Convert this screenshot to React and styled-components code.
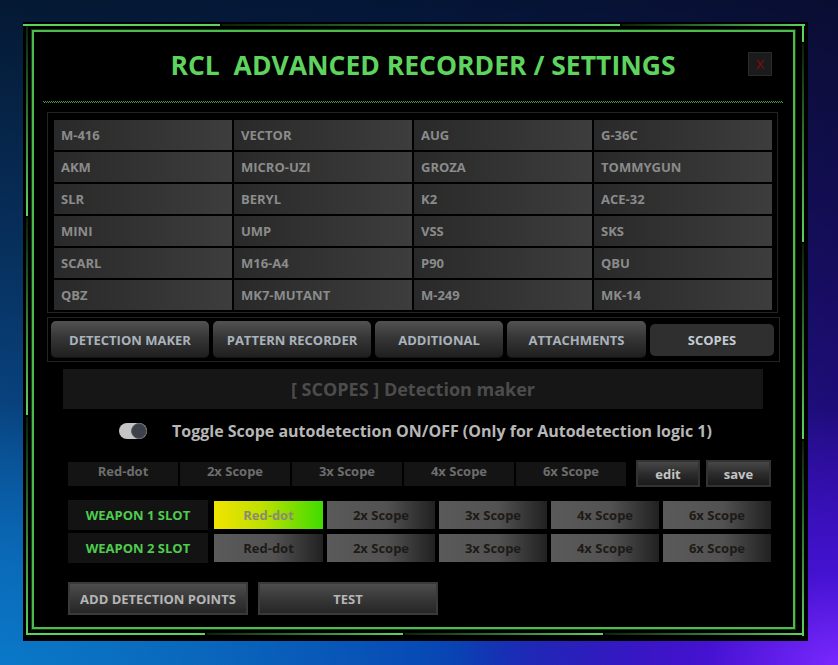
import React, { useState } from 'react';
import styled, { createGlobalStyle, css } from 'styled-components';

const palette = {
  lit: '#5dd35d',
  dim: '#0b220b',
  frame: '#4cbb4c',
  title: '#5ed45e',
  slot: '#4fcc4f',
};

const GlobalStyle = createGlobalStyle`
  html, body {
    margin: 0;
    padding: 0;
  }
  body {
    width: 838px;
    height: 665px;
    overflow: hidden;
    font-family: 'Open Sans', 'Noto Sans', 'DejaVu Sans', sans-serif;
    background:
      radial-gradient(ellipse 380px 260px at 100% 100%, #7a28ff 0%, #4412d0 35%, rgba(40, 10, 160, 0) 100%),
      radial-gradient(ellipse 520px 260px at 0% 100%, #0a78c8 0%, rgba(10, 100, 190, 0) 100%),
      linear-gradient(180deg, rgba(4, 14, 32, 0.85) 0%, rgba(4, 14, 32, 0.5) 40%, rgba(4, 14, 32, 0) 85%),
      linear-gradient(90deg, #0a56a0 0%, #0640b2 50%, #280a98 100%);
  }
`;

// decorative outer frame: gradient strokes drawn as background layers
const seg = (dir, x, y, w, h, from, to) =>
  `linear-gradient(${dir}, ${from}, ${to}) ${x}px ${y}px / ${w}px ${h}px no-repeat`;

const H = '90deg';
const V = '180deg';
const { lit, dim } = palette;

const frameLines = [
  seg(H, 0, 2, 197, 2, lit, lit),
  seg(H, 199, 2, 398, 2, dim, lit),
  seg(H, 599, 2, 183, 2, dim, lit),
  seg(V, 3, 2, 2, 192, dim, lit),
  seg(V, 3, 196, 2, 197, dim, lit),
  seg(V, 3, 395, 2, 218, dim, lit),
  seg(V, 779, 2, 2, 18, lit, lit),
  seg(V, 779, 22, 2, 198, dim, lit),
  seg(V, 779, 222, 2, 195, dim, lit),
  seg(V, 779, 419, 2, 195, dim, lit),
  seg(H, 3, 611, 179, 2, lit, lit),
  seg(H, 184, 611, 196, 2, dim, lit),
  seg(H, 382, 611, 198, 2, dim, lit),
  seg(H, 582, 611, 199, 2, dim, lit),
].join(',\n');

const Page = styled.div`
  width: 838px;
  height: 665px;
  box-sizing: border-box;
  padding: 22px 0 0 23px;
`;

const Window = styled.div`
  width: 785px;
  height: 619px;
  box-sizing: border-box;
  padding: 8px 0 0 9px;
  background: ${frameLines}, #000;
`;

const InnerFrame = styled.div`
  width: 763px;
  height: 599px;
  box-sizing: border-box;
  border: 2px solid ${palette.frame};
  box-shadow: 0 0 0 1px #173d17;
  display: flex;
  flex-direction: column;
`;

const TitleBar = styled.div`
  height: 64px;
  display: flex;
  align-items: center;
`;

const Title = styled.h1`
  flex: 1;
  margin: 0;
  padding: 3px 0 0 64px;
  text-align: center;
  white-space: pre;
  font-size: 26.5px;
  line-height: 1;
  font-weight: 700;
  color: ${palette.title};
`;

const CloseBtn = styled.button`
  width: 24px;
  height: 24px;
  margin-right: 21px;
  padding: 0;
  background: #1b1b1b;
  border: 1px solid #2a2a2a;
  color: #820c0c;
  font-family: 'Liberation Sans', sans-serif;
  font-size: 13px;
  display: flex;
  align-items: center;
  justify-content: center;
`;

const Divider = styled.div`
  margin: 5px 0 0 9px;
  width: 740px;
  height: 2px;
  background:
    linear-gradient(90deg, #3f993f 50%, transparent 50%) 0 0 / 2px 1px repeat-x,
    linear-gradient(90deg, transparent 50%, #3f993f 50%) 0 1px / 2px 1px repeat-x;
`;

const Panel = styled.div`
  margin-left: 13px;
  box-sizing: border-box;
  border: 1px solid #242424;
`;

const WeaponPanel = styled(Panel)`
  margin-top: 9px;
  width: 731px;
  padding: 7px 5px 2px 6px;
  display: grid;
  grid-template-columns: repeat(4, 178px);
  grid-auto-rows: 30px;
  gap: 2px;
`;

const WeaponCell = styled.div`
  display: flex;
  align-items: center;
  padding-left: 7px;
  background: linear-gradient(90deg, #292929 0%, #3d3d3d 100%);
  color: #8b8b8b;
  font-size: 13px;
  font-weight: 700;
`;

const TabPanel = styled(Panel)`
  margin-top: 4px;
  width: 733px;
  height: 45px;
  padding: 3px;
  display: flex;
  align-items: center;
  gap: 4px;
`;

const Tab = styled.button`
  width: ${({ w }) => w}px;
  height: 37px;
  padding: 0;
  border: none;
  border-radius: 5px;
  font-family: inherit;
  font-size: 13px;
  font-weight: 700;
  color: #aab3bc;
  background: linear-gradient(180deg, #525252 0%, #363636 45%, #1e1e1e 100%);
  box-shadow: inset 0 -1px 0 #141414;
  ${({ active }) =>
    active &&
    css`
      height: 32px;
      background: #2f2f2f;
      box-shadow: none;
      color: #c5ccd3;
    `}
`;

const HeaderBar = styled.div`
  margin: 7px 0 0 29px;
  width: 700px;
  height: 40px;
  background: #161616;
  display: flex;
  align-items: center;
  justify-content: center;
  color: #4c4c4c;
  font-size: 18px;
  font-weight: 700;
`;

const ToggleRow = styled.div`
  margin-top: 13px;
  padding-left: 85px;
  height: 17px;
  display: flex;
  align-items: center;
`;

const Track = styled.div`
  width: 28px;
  height: 16px;
  box-sizing: border-box;
  border-radius: 8px;
  background: #c4c4c4;
  display: flex;
  justify-content: flex-end;
  align-items: center;
`;

const Knob = styled.div`
  width: 16px;
  height: 16px;
  box-sizing: border-box;
  border-radius: 50%;
  background: #3b4049;
  border: 1px solid #5b606a;
`;

const ToggleLabel = styled.span`
  margin-left: 25px;
  color: #b7b7b7;
  font-size: 16px;
  font-weight: 700;
`;

const ScopeHeadRow = styled.div`
  margin: 21px 0 0 34px;
  display: flex;
  align-items: center;
  gap: 2px;
`;

const ScopeHead = styled.div`
  width: 110px;
  height: 24px;
  box-sizing: border-box;
  padding-bottom: 5px;
  background: #141414;
  color: #6d6d6d;
  font-size: 13px;
  font-weight: 700;
  display: flex;
  align-items: center;
  justify-content: center;
`;

const SmallBtn = styled.button`
  width: ${({ w }) => w}px;
  height: 27px;
  margin-left: ${({ ml }) => ml}px;
  padding: 0;
  box-sizing: border-box;
  border: 2px solid #333;
  background: linear-gradient(180deg, #474747 0%, #2a2a2a 55%, #1a1a1a 100%);
  color: #c3c3c3;
  font-family: inherit;
  font-size: 13px;
  font-weight: 700;
`;

const SlotList = styled.div`
  margin: 13px 0 0 34px;
  display: flex;
  flex-direction: column;
  gap: 3px;
`;

const SlotRow = styled.div`
  display: flex;
  align-items: center;
  gap: 4px;
`;

const SlotLabel = styled.div`
  width: 140px;
  height: 30px;
  margin-right: 2px;
  background: #131313;
  color: ${palette.slot};
  font-size: 13px;
  font-weight: 700;
  display: flex;
  align-items: center;
  justify-content: center;
`;

const ScopeBtn = styled.button`
  width: ${({ first }) => (first ? 109 : 108)}px;
  height: 28px;
  padding: 0;
  border: none;
  font-family: inherit;
  font-size: 13px;
  font-weight: 700;
  color: #1e1a16;
  background: linear-gradient(90deg, #5a5a5a 0%, #525252 55%, #212121 100%);
  ${({ active }) =>
    active &&
    css`
      color: #8b8b70;
      background: linear-gradient(90deg, #f2e300 0%, #bde000 45%, #40dc00 100%);
    `}
`;

const BottomRow = styled.div`
  margin: 19px 0 0 34px;
  display: flex;
  gap: 10px;
`;

const BigBtn = styled.button`
  width: 180px;
  height: 33px;
  padding: 0;
  box-sizing: border-box;
  border: 2px solid #3a3a3a;
  background: linear-gradient(180deg, #4d4d4d 0%, #363636 55%, #262626 100%);
  color: #b6b6b6;
  font-family: inherit;
  font-size: 13px;
  font-weight: 700;
`;

const weapons = [
  'M-416', 'VECTOR', 'AUG', 'G-36C',
  'AKM', 'MICRO-UZI', 'GROZA', 'TOMMYGUN',
  'SLR', 'BERYL', 'K2', 'ACE-32',
  'MINI', 'UMP', 'VSS', 'SKS',
  'SCARL', 'M16-A4', 'P90', 'QBU',
  'QBZ', 'MK7-MUTANT', 'M-249', 'MK-14',
];

const tabs = [
  { label: 'DETECTION MAKER', w: 158 },
  { label: 'PATTERN RECORDER', w: 158 },
  { label: 'ADDITIONAL', w: 128 },
  { label: 'ATTACHMENTS', w: 139 },
  { label: 'SCOPES', w: 124 },
];

const scopes = ['Red-dot', '2x Scope', '3x Scope', '4x Scope', '6x Scope'];

function App() {
  const [activeTab, setActiveTab] = useState('SCOPES');
  const [selected, setSelected] = useState({ 1: 'Red-dot', 2: null });

  const pickScope = (slot, scope) => {
    setSelected((prev) => ({ ...prev, [slot]: scope }));
  };

  return (
    <Page>
      <GlobalStyle />
      <Window>
        <InnerFrame>
          <TitleBar>
            <Title>{'RCL  ADVANCED RECORDER / SETTINGS'}</Title>
            <CloseBtn>X</CloseBtn>
          </TitleBar>
          <Divider />
          <WeaponPanel>
            {weapons.map((name) => (
              <WeaponCell key={name}>{name}</WeaponCell>
            ))}
          </WeaponPanel>
          <TabPanel>
            {tabs.map((t) => (
              <Tab
                key={t.label}
                w={t.w}
                active={activeTab === t.label}
                onClick={() => setActiveTab(t.label)}
              >
                {t.label}
              </Tab>
            ))}
          </TabPanel>
          <HeaderBar>[ SCOPES ] Detection maker</HeaderBar>
          <ToggleRow>
            <Track>
              <Knob />
            </Track>
            <ToggleLabel>
              Toggle Scope autodetection ON/OFF (Only for Autodetection logic 1)
            </ToggleLabel>
          </ToggleRow>
          <ScopeHeadRow>
            {scopes.map((s) => (
              <ScopeHead key={s}>{s}</ScopeHead>
            ))}
            <SmallBtn w={64} ml={8}>edit</SmallBtn>
            <SmallBtn w={65} ml={4}>save</SmallBtn>
          </ScopeHeadRow>
          <SlotList>
            {[1, 2].map((slot) => (
              <SlotRow key={slot}>
                <SlotLabel>WEAPON {slot} SLOT</SlotLabel>
                {scopes.map((s, i) => (
                  <ScopeBtn
                    key={s}
                    first={i === 0}
                    active={selected[slot] === s}
                    onClick={() => pickScope(slot, s)}
                  >
                    {s}
                  </ScopeBtn>
                ))}
              </SlotRow>
            ))}
          </SlotList>
          <BottomRow>
            <BigBtn>ADD DETECTION POINTS</BigBtn>
            <BigBtn>TEST</BigBtn>
          </BottomRow>
        </InnerFrame>
      </Window>
    </Page>
  );
}

export default App;
